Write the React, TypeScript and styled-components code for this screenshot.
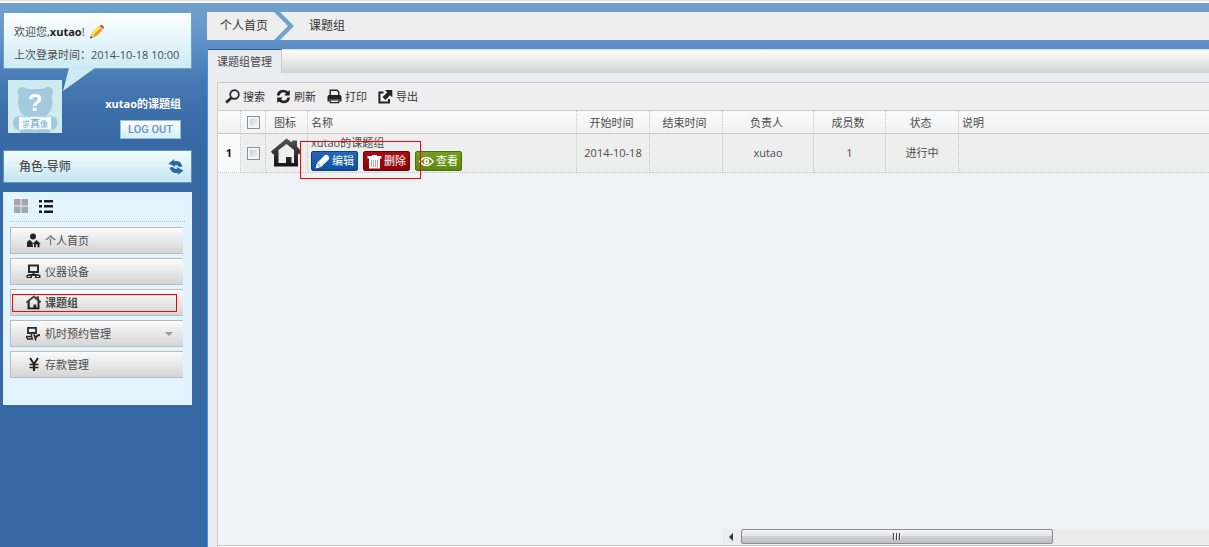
import React from "react";
import styled, { createGlobalStyle } from "styled-components";

const GlobalStyle = createGlobalStyle`
  * { box-sizing: border-box; }
  body {
    margin: 0;
    font-family: "Open Sans", "Noto Sans CJK SC", sans-serif;
    font-size: 11px;
    line-height: 16px;
    color: #4c4c4c;
    background: #3668a3;
  }
  button, input { font: inherit; color: inherit; margin: 0; }
  button { cursor: pointer; }
  a { color: inherit; text-decoration: none; }
  svg { display: block; flex: none; }
`;

const Page = styled.div`
  min-height: 100vh;
  display: flex;
  flex-direction: column;
`;

const BrowserEdge = styled.div`
  height: 3px;
  background: #fff;
  border-top: 1px solid #e2e2e4;
`;

const Shell = styled.div`
  flex: 1;
  display: flex;
  background: linear-gradient(#70a1cc 0, #6b9bca 18px, #5b8ec6 46px, #4577b2 80px, #3769a4 130px, #3668a3 100%);
`;

const Sidebar = styled.aside`
  width: 207px;
  flex: none;
  padding: 9px 15px 9px 3px;
`;

const Bubble = styled.div`
  position: relative;
  padding: 7px 10px 2px;
  line-height: 23px;
  border: 1px solid #6da0ce;
  background: linear-gradient(#fcfffe, #cdebf4);
`;

const Greeting = styled.div`
  display: flex;
  align-items: center;
  white-space: pre;
  strong { color: #222; }
  svg { margin-left: 4px; }
`;

const Tail = styled.svg`
  position: absolute;
  left: 59px;
  top: 55px;
`;

const Profile = styled.div`
  display: flex;
  justify-content: space-between;
  padding: 11px 11px 11px 5px;
`;

const ProfileInfo = styled.div`
  display: flex;
  flex-direction: column;
  align-items: flex-end;
  padding-top: 16px;
  gap: 8px;
  strong { color: #fff; }
`;

const Logout = styled.button`
  height: 19px;
  width: 61px;
  padding: 0;
  border: 1px solid #8fc0dc;
  background: linear-gradient(#fff, #d3edf6);
  font: 500 11px/17px Roboto, sans-serif;
  color: #6595c8;
`;

const RoleBar = styled.div`
  display: flex;
  align-items: center;
  justify-content: space-between;
  height: 33px;
  padding: 0 7px 0 15px;
  border: 1px solid #5b93c6;
  background: linear-gradient(#f4fcfd, #c4e6f0);
  font-size: 12px;
  font-weight: 500;
`;

const IconButton = styled.button`
  padding: 0;
  border: 0;
  background: none;
`;

const MenuPanel = styled.nav`
  margin-top: 9px;
  padding: 7px 7px 27px;
  background: #e1f4ff;
`;

const ViewSwitch = styled.div`
  display: flex;
  gap: 11px;
  padding: 0 4px 8px;
  border-bottom: 1px dotted #b5bcc2;
`;

const MenuList = styled.ul`
  list-style: none;
  margin: 0;
  padding: 5px 2px 0 0;
  display: flex;
  flex-direction: column;
  gap: 4px;
`;

const MenuItem = styled.li<{ $active?: boolean }>`
  position: relative;
  font-weight: ${(p) => (p.$active ? 700 : 400)};
`;

const MenuLink = styled.a`
  display: flex;
  align-items: center;
  gap: 4px;
  height: 27px;
  padding: 0 10px 0 15px;
  border: 1px solid #bbb;
  border-right: 0;
  background: linear-gradient(#fbfbfb, #d5d5d5);
`;

const Caret = styled.i`
  margin-left: auto;
  border: 4px solid transparent;
  border-top-color: #999;
  border-bottom: 0;
`;

const MenuMark = styled.span`
  position: absolute;
  inset: 5px 6px 4px 2px;
  border: 1px solid #f00;
  pointer-events: none;
`;

const Main = styled.main`
  flex: 1;
  min-width: 0;
  padding-top: 9px;
  display: flex;
  flex-direction: column;
`;

const Breadcrumb = styled.nav`
  display: flex;
  align-items: center;
  height: 28px;
  padding-left: 13px;
  background: #eee;
  font-size: 12px;
  color: #333;
  svg { margin: 0 15px 0 6px; }
`;

const Panel = styled.section`
  flex: 1;
  margin-top: 9px;
  border-left: 1px solid #4795d3;
  background: #ebecf1;
  display: flex;
  flex-direction: column;
`;

const TabStrip = styled.div`
  display: flex;
  height: 24px;
  border-top: 1px solid #d5dce8;
  background: linear-gradient(#fff, #d3d3d3);
`;

const Tab = styled.button`
  margin-top: -1px;
  padding: 0 9px;
  border: 0;
  border-top: 1px solid #2459a8;
  border-right: 1px solid #ccc;
  background: #ebecf1;
  color: #444;
`;

const Grid = styled.div`
  flex: 1;
  display: flex;
  flex-direction: column;
  margin: 9px 0 0 9px;
  padding-bottom: 1px;
  border-top: 1px solid #ccc;
  border-left: 1px solid #ccc;
  background: #fff;
`;

const Toolbar = styled.div`
  display: flex;
  gap: 11px;
  height: 28px;
  padding: 0 7px;
  border-bottom: 1px solid #ccc;
  background: #eee;
`;

const ToolButton = styled.button`
  display: flex;
  align-items: center;
  gap: 3px;
  padding: 0;
  border: 0;
  background: none;
  color: #333;
`;

const GridBody = styled.div`
  flex: 1;
  background: #eff3f7;
  border-bottom: 1px solid #c4c6c9;
  display: flex;
  flex-direction: column;
  justify-content: space-between;
`;

const Table = styled.table`
  width: 100%;
  table-layout: fixed;
  border-collapse: separate;
  border-spacing: 0;
`;

const HeadCell = styled.th<{ $left?: boolean }>`
  height: 23px;
  padding: ${(p) => (p.$left ? "2px 3px 0" : "2px 5px 0 2px")};
  font-weight: 400;
  text-align: ${(p) => (p.$left ? "left" : "center")};
  background: linear-gradient(#fbfbfb, #f2f2f2);
  border-right: 1px dotted #c4c4c4;
  border-bottom: 1px solid #c8c8c8;
  &:last-child { border-right: 0; }
`;

const CheckHeadCell = styled(HeadCell)`
  padding: 0;
`;

const Cell = styled.td<{ $left?: boolean; $number?: boolean }>`
  height: 39px;
  padding: 0 3px;
  text-align: ${(p) => (p.$left ? "left" : "center")};
  font-weight: ${(p) => (p.$number ? 700 : 400)};
  color: ${(p) => (p.$number ? "#111" : "#4c4c4c")};
  background: ${(p) => (p.$number ? "#fafafa" : "#eee")};
  border-right: 1px dotted #c4c4c4;
  border-bottom: 1px dotted #c4c4c4;
  &:last-child { border-right: 0; }
`;

const IconCell = styled(Cell)`
  padding: 0 5px;
`;

const Check = styled.input`
  appearance: none;
  display: block;
  width: 13px;
  height: 13px;
  margin: 0 auto;
  border: 1px solid #8e8f8f;
  background: linear-gradient(135deg, #b4bccb, #f6f6f6 80%);
  box-shadow: inset 0 0 0 2px #f4f4f4;
`;

const NameBox = styled.div`
  position: relative;
  height: 38px;
  padding-top: 1px;
`;

const Actions = styled.div`
  display: flex;
  gap: 5px;
`;

const ActionButton = styled.button<{ $from: string; $to: string; $edge: string }>`
  display: flex;
  align-items: center;
  gap: 2px;
  height: 20px;
  padding: 0 3px;
  border: 1px solid ${(p) => p.$edge};
  border-radius: 2px;
  background: linear-gradient(${(p) => p.$from}, ${(p) => p.$to});
  color: #fff;
`;

const ActionMark = styled.span`
  position: absolute;
  left: -11px;
  top: 7px;
  width: 121px;
  height: 38px;
  border: 1px solid #f00;
  pointer-events: none;
`;

const ScrollBar = styled.div`
  display: flex;
  height: 16px;
  margin-left: 505px;
  background: #ececec;
`;

const ScrollArrow = styled.button`
  width: 18px;
  padding: 0 6px;
  border: 0;
  background: none;
`;

const ScrollThumb = styled.div`
  flex: 311;
  display: flex;
  justify-content: center;
  align-items: center;
  gap: 1px;
  height: 15px;
  border: 1px solid #8b8b8b;
  border-radius: 2px;
  background: linear-gradient(#f5f5f5, #e4e4e5 45%, #cfcfd1 50%, #bebfc1);
`;

const Grip = styled.i`
  width: 2px;
  height: 7px;
  border-left: 1px solid #444;
  border-right: 1px solid #f4f4f4;
`;

const ScrollRest = styled.div`
  flex: 157;
`;

type IconProps = { size?: number };

const HouseIcon = ({ size = 15 }: IconProps) => (
  <svg width={size} height={size} viewBox="0 0 30 30">
    <defs>
      <linearGradient id="house" x2="0" y2="1">
        <stop stopColor="#555" />
        <stop offset="1" stopColor="#161212" />
      </linearGradient>
    </defs>
    <path
      fill="url(#house)"
      fillRule="evenodd"
      d="M15.500 .5 L21 4.500 V2.500 H26 V8.500 L30.500 13.500 L28 16.500 L27 15.500 V28.500 H3 V15.500 L2 16.500 L0 13.500 Z M15.500 6 L7.500 12 V25 H15 V19 H20.500 V25 H23 V12 Z"
    />
  </svg>
);

const PersonIcon = () => (
  <svg width="15" height="15" viewBox="0 0 15 15" fill="#222">
    <circle cx="7" cy="3.500" r="3" />
    <path d="M1 14 V10 Q1 7.500 4 7 L7 10 L9 7 L6.500 10.500 L7 14 Z" />
    <path d="M10.500 7 L14.800 11 H13.500 V14.200 H11.500 V11.500 H9.800 V14.200 H8 V11 H6.500 Z" />
  </svg>
);

const ComputerIcon = () => (
  <svg width="15" height="15" viewBox="0 0 15 15">
    <path d="M3 1.500 H12 V8 H3 Z" fill="none" stroke="#2a2a2a" strokeWidth="2" />
    <path d="M6.500 8 H8.500 V10 H11 L14.500 11 V14 H9 V12 H6 V14 H.5 V11 L4 10 H6.500 Z" fill="#2a2a2a" />
    <path d="M2 12.500 H4.500 M10.500 12.500 H13" stroke="#ddd" />
  </svg>
);

const BookingIcon = () => (
  <svg width="15" height="15" viewBox="0 0 15 15" fill="none" stroke="#2a2a2a">
    <path d="M2 1.800 H10 V7 H2 Z" strokeWidth="1.800" />
    <path d="M5.500 7 V10 M.5 10.500 H5.500 L6.500 13 H1.500 Z" strokeWidth="1.300" />
    <path d="M8 8.500 L9.500 12.500 Q10.500 9 14 9" strokeWidth="2" />
  </svg>
);

const YenIcon = () => (
  <svg width="15" height="15" viewBox="0 0 15 15" fill="none" stroke="#222">
    <path d="M4 1 L8 7 L12 1" strokeWidth="2" />
    <path d="M3.500 7.500 H12.500 M3.500 10.500 H12.500" strokeWidth="1.500" />
    <path d="M8 6 V14" strokeWidth="2.200" />
  </svg>
);

const PencilColor = () => (
  <svg width="16" height="16" viewBox="0 0 16 16">
    <path d="M1 14.500 L2.500 9.500 L6.500 13 Z" fill="#e9bf8b" />
    <path d="M1 14.500 L1.800 12 L3.500 13.700 Z" fill="#333" />
    <path d="M2.500 9.500 L9.500 2.500 L13.300 6 L6.500 13 Z" fill="#f09a10" />
    <path d="M2.500 9.500 L9.500 2.500 L11.300 4.200 L4.400 11.200 Z" fill="#ffe04a" />
    <path d="M9.500 2.500 L10.700 1.500 L14.300 5 L13.300 6 Z" fill="#b9c0c8" />
    <path d="M10.700 1.500 Q12.500 .3 14.200 1.700 Q15.600 3.400 14.300 5 Z" fill="#d8392d" />
  </svg>
);

const Avatar = () => (
  <svg width="54" height="53" viewBox="0 0 54 53">
    <rect width="54" height="53" fill="#d0eaf1" />
    <g fill="#a3c9dc">
      <circle cx="14.500" cy="12" r="5" />
      <circle cx="40" cy="12" r="5" />
      <path d="M16 8.500 Q27 9.500 38.500 8.500 Q45 13 44.500 23 Q44 31 38 36 H16 Q10.500 31 10 23 Q9.500 13 16 8.500 Z" />
      <ellipse cx="9" cy="43" rx="4" ry="6.500" />
      <ellipse cx="45.500" cy="43" rx="4" ry="6.500" />
      <path d="M12 49 H42 V53 H12 Z" />
    </g>
    <path d="M10.500 36 Q18 38 27 36 Q37 38 43.500 36 V50.500 Q36 48.500 27 50 Q18 48.500 10.500 50.500 Z" fill="#f4fbfd" stroke="#a9cede" />
    <text x="27" y="31" textAnchor="middle" fontFamily="Liberation Sans" fontWeight="700" fontSize="24" fill="#fff">?</text>
    <text x="18" y="47" textAnchor="middle" fontFamily="Noto Sans CJK SC" fontSize="8" fill="#7fafca">求</text>
    <text x="27" y="47" textAnchor="middle" fontFamily="Noto Sans CJK SC" fontSize="10" fill="#6fa5c4">真</text>
    <text x="36" y="47" textAnchor="middle" fontFamily="Noto Sans CJK SC" fontSize="8" fill="#7fafca">像</text>
  </svg>
);

const SyncIcon = () => (
  <svg width="16" height="16" viewBox="0 0 16 16" fill="#2b66a4">
    <path d="M.5 4.500 L6 .3 L6.300 2.200 Q12.500 1 14.500 7.500 L11 8 Q9.500 5.500 7 6 L7.500 8 Z" />
    <path d="M15.500 11.500 L10 15.700 L9.700 13.800 Q3.500 15 1.500 8.500 L5 8 Q6.500 10.500 9 10 L8.500 8 Z" />
  </svg>
);

const TilesIcon = () => (
  <svg width="14" height="14" viewBox="0 0 14 14" fill="#a5a7a9">
    <path d="M0 0h6.500v6.500H0z M7.500 0H14v6.500H7.500z M0 7.500h6.500V14H0z M7.500 7.500H14V14H7.500z" />
  </svg>
);

const ListIcon = () => (
  <svg width="14" height="14" viewBox="0 0 14 14" fill="#1a1a1a">
    <path d="M0 1h3v2.500H0z M5 1h9v2.500H5z M0 6h3v2.500H0z M5 6h9v2.500H5z M0 11.500h3V14H0z M5 11.500h9V14H5z" />
  </svg>
);

const SearchIcon = () => (
  <svg width="15" height="15" viewBox="0 0 15 15" fill="none" stroke="#222">
    <circle cx="9.500" cy="5.500" r="4.300" strokeWidth="1.700" />
    <path d="M6.200 9 L1.200 13.500" strokeWidth="2.800" />
  </svg>
);

const RefreshIcon = () => (
  <svg width="15" height="15" viewBox="0 0 15 15" fill="#222">
    <path d="M.8 6.500 Q1.500 1 7 .8 Q10 .8 12 2.500 L13.800 1 V6.500 H8.300 L10 4.500 Q7.500 2.500 5.200 4 Q3.800 5 3.600 6.500 Z" />
    <path d="M14 8.500 Q13.500 14 8 14.200 Q5 14.200 3 12.500 L1.200 14 V8.500 H6.700 L5 10.500 Q7.500 12.500 9.800 11 Q11.200 10 11.400 8.500 Z" />
  </svg>
);

const PrinterIcon = () => (
  <svg width="15" height="15" viewBox="0 0 15 15">
    <path d="M3.200 7 V1.200 H10 L11.800 3 V7" fill="#eee" stroke="#222" strokeWidth="1.400" />
    <path d="M1.500 6 H13.500 L14.500 7.500 V12.500 H12.500 V10.500 H2.500 V12.500 H.5 V7.500 Z" fill="#222" />
    <path d="M3.200 11 H11.800 V13.700 H3.200 Z" fill="#eee" stroke="#222" strokeWidth="1.200" />
  </svg>
);

const ExportIcon = () => (
  <svg width="15" height="15" viewBox="0 0 15 15">
    <path d="M5.500 3.500 H1.400 V13.500 H11 V10" fill="none" stroke="#222" strokeWidth="2" />
    <path d="M7 1 H14.300 V8.300 L12 6.200 L7.500 11 L4.500 8 L9.300 3.400 Z" fill="#222" />
  </svg>
);

const EditIcon = () => (
  <svg width="15" height="15" viewBox="0 0 15 15">
    <path d="M.5 14.500 L2 9 L9.500 1.500 Q11.500 0 13.500 2 Q15 4 13.500 5.700 L6 13 Z" fill="#fff" />
    <path d="M2.300 9.700 L5.500 12.700" stroke="#2160ad" strokeWidth=".8" fill="none" />
  </svg>
);

const TrashIcon = () => (
  <svg width="15" height="15" viewBox="0 0 15 15">
    <path d="M5 1 H10 V2 H14.500 V4.500 H13 V14.500 H2 V4.500 H.5 V2 H5 Z" fill="#fff" />
    <path d="M4.500 6 V13 M6.500 6 V13 M8.500 6 V13 M10.500 6 V13" stroke="#d29a9a" fill="none" />
  </svg>
);

const EyeIcon = () => (
  <svg width="15" height="15" viewBox="0 0 15 15" fill="none" stroke="#fff">
    <path d="M.7 7.500 Q7.500 -.5 14.300 7.500 Q7.500 15.500 .7 7.500 Z" strokeWidth="1.500" />
    <circle cx="7.500" cy="7.500" r="1.800" strokeWidth="1.800" />
  </svg>
);

const menu = [
  { label: "个人首页", icon: <PersonIcon /> },
  { label: "仪器设备", icon: <ComputerIcon /> },
  { label: "课题组", icon: <HouseIcon />, active: true },
  { label: "机时预约管理", icon: <BookingIcon />, expandable: true },
  { label: "存款管理", icon: <YenIcon /> },
];

const tools = [
  { label: "搜索", icon: <SearchIcon /> },
  { label: "刷新", icon: <RefreshIcon /> },
  { label: "打印", icon: <PrinterIcon /> },
  { label: "导出", icon: <ExportIcon /> },
];

const columnWidths = [23, 25, 42, 269, 73, 73, 91, 72, 73];

export default function App() {
  return (
    <Page>
      <GlobalStyle />
      <BrowserEdge />
      <Shell>
        <Sidebar>
          <Bubble>
            <Greeting>
              欢迎您,<strong>xutao</strong>!<PencilColor />
            </Greeting>
            <div>上次登录时间：2014-10-18 10:00</div>
            <Tail width="34" height="24" viewBox="0 0 34 24">
              <path d="M6 0 H32 L0 23 Z" fill="#cdebf4" />
            </Tail>
          </Bubble>
          <Profile>
            <Avatar />
            <ProfileInfo>
              <strong>xutao的课题组</strong>
              <Logout type="button">LOG OUT</Logout>
            </ProfileInfo>
          </Profile>
          <RoleBar>
            <span>角色-导师</span>
            <IconButton type="button" aria-label="切换角色"><SyncIcon /></IconButton>
          </RoleBar>
          <MenuPanel>
            <ViewSwitch>
              <IconButton type="button" aria-label="图标视图"><TilesIcon /></IconButton>
              <IconButton type="button" aria-label="列表视图"><ListIcon /></IconButton>
            </ViewSwitch>
            <MenuList>
              {menu.map((item) => (
                <MenuItem key={item.label} $active={item.active}>
                  <MenuLink href="#">
                    {item.icon}
                    {item.label}
                    {item.expandable && <Caret />}
                  </MenuLink>
                  {item.active && <MenuMark />}
                </MenuItem>
              ))}
            </MenuList>
          </MenuPanel>
        </Sidebar>
        <Main>
          <Breadcrumb>
            <a href="#">个人首页</a>
            <svg width="20" height="28" viewBox="0 0 20 28">
              <path d="M0 0 H6 L20 14 L6 28 H0 L14 14 Z" fill="#70a1cc" />
            </svg>
            <a href="#">课题组</a>
          </Breadcrumb>
          <Panel>
            <TabStrip>
              <Tab type="button">课题组管理</Tab>
            </TabStrip>
            <Grid>
              <Toolbar>
                {tools.map((tool) => (
                  <ToolButton key={tool.label} type="button">
                    {tool.icon}
                    {tool.label}
                  </ToolButton>
                ))}
              </Toolbar>
              <GridBody>
                <Table>
                  <colgroup>
                    {columnWidths.map((width, i) => <col key={i} width={width} />)}
                    <col />
                  </colgroup>
                  <thead>
                    <tr>
                      <HeadCell />
                      <CheckHeadCell><Check type="checkbox" aria-label="全选" /></CheckHeadCell>
                      <HeadCell>图标</HeadCell>
                      <HeadCell $left>名称</HeadCell>
                      <HeadCell>开始时间</HeadCell>
                      <HeadCell>结束时间</HeadCell>
                      <HeadCell>负责人</HeadCell>
                      <HeadCell>成员数</HeadCell>
                      <HeadCell>状态</HeadCell>
                      <HeadCell $left>说明</HeadCell>
                    </tr>
                  </thead>
                  <tbody>
                    <tr>
                      <Cell $number>1</Cell>
                      <Cell><Check type="checkbox" aria-label="选择 xutao的课题组" /></Cell>
                      <IconCell><HouseIcon size={30} /></IconCell>
                      <Cell $left>
                        <NameBox>
                          xutao的课题组
                          <Actions>
                            <ActionButton type="button" $from="#2467b8" $to="#104f9f" $edge="#0d4386"><EditIcon />编辑</ActionButton>
                            <ActionButton type="button" $from="#a80d14" $to="#8b0309" $edge="#730207"><TrashIcon />删除</ActionButton>
                            <ActionButton type="button" $from="#739f20" $to="#5c8a0d" $edge="#4b720a"><EyeIcon />查看</ActionButton>
                          </Actions>
                          <ActionMark />
                        </NameBox>
                      </Cell>
                      <Cell>2014-10-18</Cell>
                      <Cell />
                      <Cell>xutao</Cell>
                      <Cell>1</Cell>
                      <Cell>进行中</Cell>
                      <Cell $left />
                    </tr>
                  </tbody>
                </Table>
                <ScrollBar>
                  <ScrollArrow type="button" aria-label="向左滚动">
                    <svg width="4" height="8" viewBox="0 0 4 8"><path d="M4 0 V8 L0 4 Z" fill="#333" /></svg>
                  </ScrollArrow>
                  <ScrollThumb><Grip /><Grip /><Grip /></ScrollThumb>
                  <ScrollRest />
                </ScrollBar>
              </GridBody>
            </Grid>
          </Panel>
        </Main>
      </Shell>
    </Page>
  );
}
